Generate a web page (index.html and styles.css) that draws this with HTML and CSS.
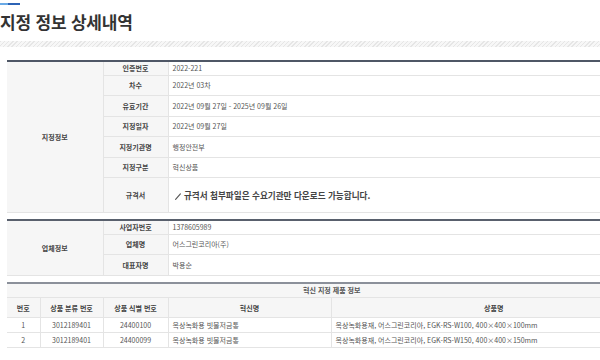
FILE: index.html
```html
<!DOCTYPE html>
<html lang="ko">
<head>
<meta charset="utf-8">
<link rel="stylesheet" href="styles.css">
</head>
<body>
<div class="page">
  <div class="title-bar"><span class="bar-light"></span><span class="bar-dark"></span></div>
  <h1 class="title">지정 정보 상세내역</h1>
  <div class="hatch"></div>

  <table class="info info-a">
    <colgroup><col class="c-group"><col class="c-label"><col></colgroup>
    <tr class="short">
      <th class="group" rowspan="7">지정정보</th>
      <th class="label">인증번호</th><td>2022-221</td>
    </tr>
    <tr><th class="label">차수</th><td>2022년 03차</td></tr>
    <tr><th class="label">유효기간</th><td>2022년 09월 27일 - 2025년 09월 26일</td></tr>
    <tr><th class="label">지정일자</th><td>2022년 09월 27일</td></tr>
    <tr><th class="label">지정기관명</th><td>행정안전부</td></tr>
    <tr><th class="label">지정구분</th><td>혁신상품</td></tr>
    <tr class="tall">
      <th class="label">규격서</th>
      <td class="notice"><svg class="pen" width="6" height="7" viewBox="0 0 6 7"><path d="M0.6 6.4 L5.4 0.8" stroke="#555" stroke-width="1.1" stroke-linecap="round"/></svg> 규격서 첨부파일은 수요기관만 다운로드 가능합니다.</td>
    </tr>
  </table>

  <table class="info info-b">
    <colgroup><col class="c-group"><col class="c-label"><col></colgroup>
    <tr class="short">
      <th class="group" rowspan="3">업체정보</th>
      <th class="label">사업자번호</th><td>1378605989</td>
    </tr>
    <tr><th class="label">업체명</th><td>어스그린코리아(주)</td></tr>
    <tr><th class="label">대표자명</th><td>박용순</td></tr>
  </table>

  <table class="products">
    <colgroup><col class="p-no"><col class="p-cls"><col class="p-id"><col class="p-name"><col></colgroup>
    <tr class="caption-row"><th colspan="5">혁신 지정 제품 정보</th></tr>
    <tr class="head-row">
      <th>번호</th><th>상품 분류 번호</th><th>상품 식별 번호</th><th>혁신명</th><th>상품명</th>
    </tr>
    <tr class="data-row">
      <td class="center">1</td><td class="center">3012189401</td><td class="center">24400100</td>
      <td>옥상녹화용 빗물저금통</td><td>옥상녹화용재, 어스그린코리아, EGK-RS-W100, 400×400×100mm</td>
    </tr>
    <tr class="data-row">
      <td class="center">2</td><td class="center">3012189401</td><td class="center">24400099</td>
      <td>옥상녹화용 빗물저금통</td><td>옥상녹화용재, 어스그린코리아, EGK-RS-W150, 400×400×150mm</td>
    </tr>
  </table>
</div>
</body>
</html>
```

FILE: styles.css
```css
html, body {
  margin: 0;
  padding: 0;
  overflow: hidden;
  background: #ffffff;
}

body {
  font-family: "Noto Sans CJK KR", "Noto Sans", sans-serif;
  color: #555;
}

.page {
  width: 660px;
}

.title-bar {
  display: flex;
  padding-top: 3px;
  height: 2px;
}

.bar-light {
  width: 8px;
  height: 2px;
  background: #6aaae6;
}

.bar-dark {
  width: 12px;
  height: 2px;
  background: #2c63b5;
}

.title {
  margin: 0;
  padding-top: 5px;
  height: 31px;
  font-size: 17px;
  line-height: 24px;
  font-weight: 700;
  color: #333;
  letter-spacing: -0.2px;
}

.hatch {
  height: 6px;
  width: 600px;
  background: repeating-linear-gradient(135deg, #e6e6e6 0 1px, #f7f7f7 1px 3px);
}

table {
  border-collapse: collapse;
  table-layout: fixed;
  width: 650px;
  margin-left: 7px;
}

.info-a {
  margin-top: 13px;
  border-top: 2px solid #4f5766;
}

.info-b {
  margin-top: 6px;
  border-top: 2px solid #59606d;
}

.c-group { width: 96px; }
.c-label { width: 65px; }

th, td {
  padding: 0;
  font-size: 7px;
  line-height: 10px;
  border-bottom: 1px solid #e4e4e4;
}

.info tr { height: 20.5px; }
.info tr.short { height: 14px; }
.info tr.tall { height: 35px; }

.group {
  background: #f6f6f6;
  font-weight: 700;
  color: #444;
  text-align: center;
  border-right: 1px solid #e4e4e4;
}

.label {
  background: #f6f6f6;
  font-weight: 700;
  color: #444;
  text-align: center;
  border-right: 1px solid #e4e4e4;
}

.info td {
  padding-left: 4px;
  color: #555;
}

.info td.notice {
  padding-left: 6px;
  font-size: 8.6px;
  font-weight: 700;
  color: #444;
}

.pen {
  vertical-align: -1px;
  margin-right: 1px;
}

.products {
  margin-top: 6px;
  border-top: 2px solid #8b909a;
}

.p-no { width: 33px; }
.p-cls { width: 63px; }
.p-id { width: 65px; }
.p-name { width: 163px; }

.caption-row { height: 15px; }
.caption-row th {
  background: #f6f6f6;
  font-weight: 700;
  color: #555;
  text-align: center;
}

.head-row { height: 20px; }
.head-row th {
  background: #f6f6f6;
  font-weight: 700;
  color: #444;
  text-align: center;
  border-right: 1px solid #e4e4e4;
}

.data-row { height: 15px; }
.data-row td {
  border-right: 1px solid #e4e4e4;
  padding-left: 4px;
  color: #555;
}

.data-row td.center {
  text-align: center;
  padding-left: 0;
}
```
